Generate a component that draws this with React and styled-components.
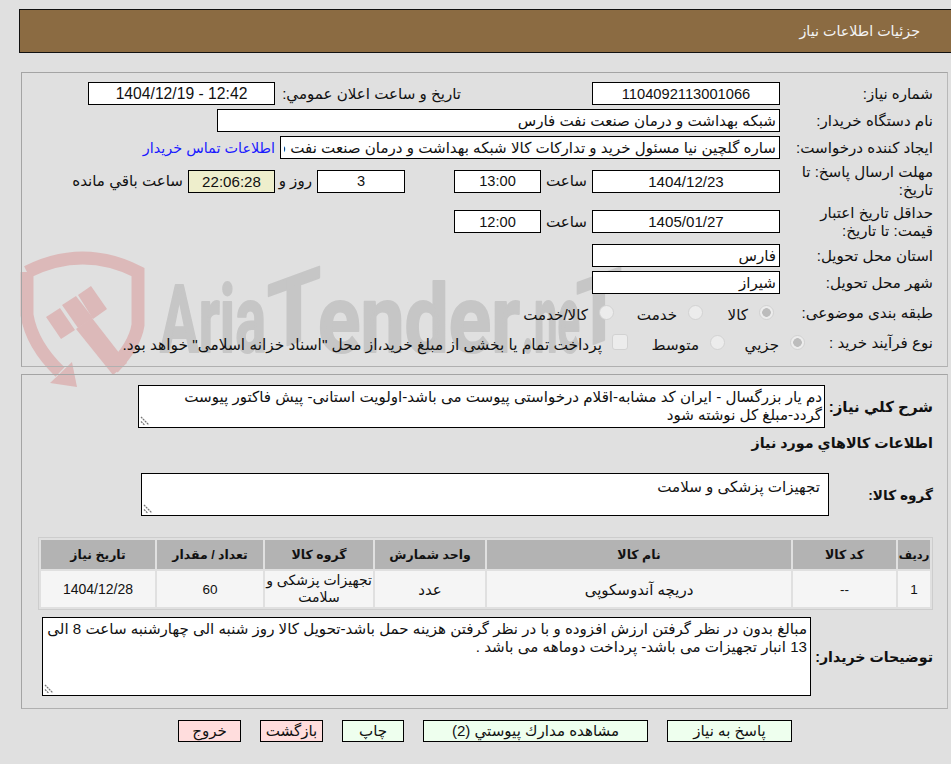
import React from 'react';
import styled, { createGlobalStyle } from 'styled-components';

const GlobalStyle = createGlobalStyle`
  html, body {
    margin: 0;
    padding: 0;
    background: #e0e0e0;
  }
  body {
    font-family: "Liberation Sans", "DejaVu Sans", sans-serif;
    font-size: 15.1px;
    color: #111;
  }
`;

const Page = styled.div`
  position: relative;
  width: 951px;
  height: 764px;
  overflow: hidden;
  direction: rtl;
`;

const Watermark = styled.svg`
  position: absolute;
  left: 0;
  top: 0;
  pointer-events: none;
`;

const Content = styled.div`
  position: relative;
  padding-top: 9px;
`;

const Header = styled.div`
  display: flex;
  align-items: center;
  box-sizing: border-box;
  width: 935px;
  height: 44px;
  margin-right: -3px;
  padding-right: 33px;
  background: #8b6b42;
  border: 1px solid #111;
  color: #f4f4f4;
  font-size: 14.3px;
`;

const Panel = styled.div`
  box-sizing: border-box;
  width: 927px;
  height: ${(p) => p.$h}px;
  margin: ${(p) => p.$top}px 3px 0 0;
  padding: ${(p) => p.$pad}px 14px 0 0;
  border: 1px solid #a4a4a4;
  border-bottom-color: #b0b0b0;
  border-right-color: #b8b8b8;
`;

const Row = styled.div`
  display: flex;
  align-items: center;
  height: ${(p) => p.$h}px;
  margin-top: ${(p) => p.$top || 0}px;
`;

const Label = styled.div`
  flex: none;
  box-sizing: border-box;
  width: ${(p) => p.$w || 153}px;
  padding-left: 12px;
  line-height: 18px;
`;

const BoldLabel = styled.div`
  flex: none;
  width: ${(p) => p.$w}px;
  font-weight: 700;
  font-size: ${(p) => p.$size}px;
  white-space: nowrap;
`;

const Field = styled.input`
  flex: none;
  box-sizing: border-box;
  width: ${(p) => p.$w}px;
  height: 23px;
  margin: 0;
  padding: 0 3px;
  border: 1px solid #000;
  border-radius: 0;
  outline: none;
  background: ${(p) => p.$bg || '#fff'};
  color: #111;
  font-family: inherit;
  font-size: ${(p) => p.$size || 15.1}px;
  text-align: ${(p) => (p.$center ? 'center' : 'right')};
`;

const Caption = styled.span`
  flex: none;
  width: ${(p) => p.$w}px;
  margin-right: ${(p) => p.$mr || 0}px;
  padding-right: ${(p) => p.$pr ?? 5}px;
  box-sizing: border-box;
  white-space: nowrap;
`;

const ContactLink = styled.a`
  margin-right: 5px;
  color: #1a1aff;
  font-size: 14.4px;
  text-decoration: none;
  white-space: nowrap;
`;

const Option = styled.label`
  display: flex;
  align-items: center;
  flex: none;
  width: ${(p) => p.$w}px;
  padding-top: 4px;
  font-size: ${(p) => p.$size || 15.1}px;
  white-space: nowrap;
`;

const OptionGroup = styled.div`
  display: flex;
  margin-right: ${(p) => p.$mr || 0}px;
`;

const Radio = styled.input.attrs({ type: 'radio', disabled: true })`
  appearance: none;
  box-sizing: border-box;
  flex: none;
  width: 15px;
  height: 15px;
  margin: -6px 0 0 11px;
  border: 1px solid #d2d2d2;
  border-radius: 50%;
  background: #ececec;

  &:checked {
    background: radial-gradient(circle, #bcbcbc 0 4px, #ececec 4.6px);
  }
`;

const CheckBox = styled.input.attrs({ type: 'checkbox', disabled: true })`
  appearance: none;
  box-sizing: border-box;
  flex: none;
  width: 16px;
  height: 16px;
  margin: -6px 0 0 10px;
  border: 1px solid #d2d2d2;
  border-radius: 3px;
  background: #ececec;
`;

const NoteBox = styled.div`
  position: relative;
  flex: none;
  width: ${(p) => p.$w}px;
  height: ${(p) => p.$h}px;
`;

const Note = styled.textarea`
  display: block;
  box-sizing: border-box;
  width: 100%;
  height: 100%;
  margin: 0;
  padding: ${(p) => p.$py || 2}px ${(p) => p.$px}px 0 ${(p) => p.$pl || 2}px;
  border: 1px solid #000;
  border-radius: 0;
  outline: none;
  background: #fff;
  color: #111;
  font: inherit;
  line-height: 17.5px;
  overflow: hidden;
  resize: none;
`;

const GripIcon = styled.svg`
  position: absolute;
  left: 2px;
  bottom: 2px;
`;

const Heading = styled.div`
  display: flex;
  align-items: center;
  height: 30px;
  font-weight: 700;
  font-size: 14.3px;
`;

const GoodsTable = styled.table`
  width: 895px;
  margin-top: 21px;
  table-layout: fixed;
  border-collapse: separate;
  border-spacing: 2px;
  border: 1px solid #cdcdcd;
  text-align: center;
`;

const HeadCell = styled.th`
  height: 29px;
  padding: 0;
  background: #b3b3b3;
  font-size: ${(p) => p.$size || 12.5}px;
  font-weight: 700;
  white-space: nowrap;
`;

const Cell = styled.td`
  height: 36px;
  padding: 0 1px;
  background: #f5f5f5;
  font-size: ${(p) => p.$size || 15}px;
  line-height: 17px;
`;

const ButtonBar = styled.div`
  display: flex;
  gap: 19px;
  margin: 11px 159px 0 0;
`;

const Button = styled.button`
  box-sizing: border-box;
  width: ${(p) => p.$w}px;
  height: 22px;
  padding: 0;
  border: 1px solid #000;
  border-radius: 0;
  background: ${(p) => (p.$danger ? '#ffdddd' : '#eeffee')};
  color: #111;
  font: inherit;
`;

const LOGO_TEXT = '#c6c6c6';
const LOGO_RED = '#dcb9b9';

function Logo() {
  return (
    <Watermark width="951" height="764" viewBox="0 0 951 764">
      <g fill={LOGO_RED}>
        <path
          d="M27 272 Q83 244 138 272 L138 325 Q135 345 113 368 M27 272 L27 315 Q32 345 60 372"
          fill="none"
          stroke={LOGO_RED}
          strokeWidth="13"
        />
        <polygon points="72,362 77,387 50,383" />
        <polygon points="46,317 60,308 75,330 61,339" />
        <polygon points="62,305 76,296 93,318 78,328" />
        <polygon points="78,295 91,286 107,309 93,319" />
        <polygon points="76,329 92,318 127,363 113,375" />
      </g>
      <g
        fill={LOGO_TEXT}
        stroke={LOGO_TEXT}
        strokeWidth="2"
        strokeLinejoin="round"
        fontFamily="Roboto, sans-serif"
        fontWeight="700"
        fontSize="94"
      >
        <text x="160" y="352" textLength="106" lengthAdjust="spacingAndGlyphs" direction="ltr">Aria</text>
        <text x="267" y="350" textLength="54" lengthAdjust="spacingAndGlyphs" direction="ltr" transform="skewY(-20) translate(0 100)">T</text>
        <text x="318" y="352" textLength="202" lengthAdjust="spacingAndGlyphs" direction="ltr">ender</text>
        <text x="522" y="352" textLength="58" lengthAdjust="spacingAndGlyphs" direction="ltr">.ne</text>
        <text x="576" y="350" textLength="46" lengthAdjust="spacingAndGlyphs" direction="ltr" transform="skewY(-20) translate(0 210)">T</text>
      </g>
    </Watermark>
  );
}

function Grip() {
  return (
    <GripIcon width="10" height="10" viewBox="0 0 10 10">
      <path d="M1 1 L9 9 M1 5.5 L5 9.5" stroke="#777" strokeWidth="1.3" strokeDasharray="2 0.8" fill="none" />
    </GripIcon>
  );
}

function NoteField({ w, h, px, pl, py, value }) {
  return (
    <NoteBox $w={w} $h={h}>
      <Note $px={px} $pl={pl} $py={py} readOnly value={value} />
      <Grip />
    </NoteBox>
  );
}

export default function App() {
  return (
    <Page>
      <GlobalStyle />
      <Logo />
      <Content>
        <Header>جزئیات اطلاعات نیاز</Header>

        <Panel $top={19} $h={295} $pad={7}>
          <Row $h={27}>
            <Label>شماره نیاز:</Label>
            <Field $w={188} $center $size={14.7} readOnly value="1104092113001066" />
            <Caption $w={186} $mr={131} $pr={0}>تاریخ و ساعت اعلان عمومي:</Caption>
            <Field $w={187} $center $size={15.7} readOnly value="1404/12/19 - 12:42" dir="ltr" />
          </Row>
          <Row $h={27}>
            <Label>نام دستگاه خریدار:</Label>
            <Field $w={563} readOnly value="شبکه بهداشت و درمان صنعت نفت فارس" />
          </Row>
          <Row $h={27}>
            <Label>ایجاد کننده درخواست:</Label>
            <Field $w={500} readOnly value="ساره گلچین نیا مسئول خرید و تدارکات کالا شبکه بهداشت و درمان صنعت نفت فارس" />
            <ContactLink href="#">اطلاعات تماس خریدار</ContactLink>
          </Row>
          <Row $h={40}>
            <Label>مهلت ارسال پاسخ: تا تاریخ:</Label>
            <Field $w={188} $center readOnly value="1404/12/23" />
            <Caption $w={51}>ساعت</Caption>
            <Field $w={87} $center $size={14.6} readOnly value="13:00" />
            <Caption $w={49} />
            <Field $w={88} $center $size={14.6} readOnly value="3" />
            <Caption $w={42}>روز و</Caption>
            <Field $w={87} $center $bg="#eeeecc" readOnly value="22:06:28" />
            <Caption $w={120}>ساعت باقي مانده</Caption>
          </Row>
          <Row $h={41}>
            <Label>حداقل تاریخ اعتبار قیمت: تا تاریخ:</Label>
            <Field $w={188} $center readOnly value="1405/01/27" />
            <Caption $w={51}>ساعت</Caption>
            <Field $w={87} $center $size={14.6} readOnly value="12:00" />
          </Row>
          <Row $h={27}>
            <Label>استان محل تحویل:</Label>
            <Field $w={188} readOnly value="فارس" />
          </Row>
          <Row $h={27}>
            <Label>شهر محل تحویل:</Label>
            <Field $w={188} readOnly value="شیراز" />
          </Row>
          <Row $h={34}>
            <Label>طبقه بندی موضوعی:</Label>
            <OptionGroup $mr={6}>
              <Option $w={71}><Radio name="kind" defaultChecked />کالا</Option>
              <Option $w={89}><Radio name="kind" />خدمت</Option>
              <Option $w={90}><Radio name="kind" />کالا/خدمت</Option>
            </OptionGroup>
          </Row>
          <Row $h={26}>
            <Label $w={128}>نوع فرآیند خرید :</Label>
            <OptionGroup>
              <Option $w={80}><Radio name="process" defaultChecked />جزیي</Option>
              <Option $w={97}><Radio name="process" />متوسط</Option>
              <Option $w={510} $size={15.4}><CheckBox />پرداخت تمام یا بخشی از مبلغ خرید،از محل "اسناد خزانه اسلامی" خواهد بود.</Option>
            </OptionGroup>
          </Row>
        </Panel>

        <Panel $top={7} $h={335} $pad={10}>
          <Row $h={43}>
            <BoldLabel $w={108} $size={15}>شرح کلي نیاز:</BoldLabel>
            <NoteField
              w={687}
              h={43}
              px={2}
              pl={30}
              value="دم یار بزرگسال - ایران کد مشابه-اقلام درخواستی پیوست می باشد-اولویت استانی- پیش فاکتور پیوست گردد-مبلغ کل نوشته شود"
            />
          </Row>
          <Heading>اطلاعات کالاهاي مورد نیاز</Heading>
          <Row $h={43} $top={15}>
            <BoldLabel $w={104} $size={13.7}>گروه کالا:</BoldLabel>
            <NoteField w={688} h={43} px={8} py={4} value="تجهیزات پزشکی و سلامت" />
          </Row>
          <GoodsTable>
            <colgroup>
              <col width="32" />
              <col width="103" />
              <col width="304" />
              <col width="110" />
              <col width="108" />
              <col width="106" />
              <col width="114" />
            </colgroup>
            <thead>
              <tr>
                <HeadCell $size={11.5}>ردیف</HeadCell>
                <HeadCell>کد کالا</HeadCell>
                <HeadCell>نام کالا</HeadCell>
                <HeadCell>واحد شمارش</HeadCell>
                <HeadCell>گروه کالا</HeadCell>
                <HeadCell>تعداد / مقدار</HeadCell>
                <HeadCell>تاریخ نیاز</HeadCell>
              </tr>
            </thead>
            <tbody>
              <tr>
                <Cell $size={13.5}>1</Cell>
                <Cell $size={13.5}>--</Cell>
                <Cell>دریچه آندوسکوپی</Cell>
                <Cell>عدد</Cell>
                <Cell $size={14}>تجهیزات پزشکی و سلامت</Cell>
                <Cell $size={13.5}>60</Cell>
                <Cell $size={14}>1404/12/28</Cell>
              </tr>
            </tbody>
          </GoodsTable>
          <Row $h={79} $top={7}>
            <BoldLabel $w={122} $size={14.2}>توضیحات خریدار:</BoldLabel>
            <NoteField
              w={769}
              h={79}
              px={3}
              pl={4}
              value="مبالغ بدون در نظر گرفتن ارزش افزوده و با در نظر گرفتن هزینه حمل باشد-تحویل کالا روز شنبه الی چهارشنبه ساعت 8 الی 13 انبار تجهیزات می باشد- پرداخت دوماهه می باشد ."
            />
          </Row>
        </Panel>

        <ButtonBar>
          <Button $w={125}>پاسخ به نیاز</Button>
          <Button $w={225}>مشاهده مدارك پیوستي (2)</Button>
          <Button $w={62}>چاپ</Button>
          <Button $w={63} $danger>بازگشت</Button>
          <Button $w={63} $danger>خروج</Button>
        </ButtonBar>
      </Content>
    </Page>
  );
}
